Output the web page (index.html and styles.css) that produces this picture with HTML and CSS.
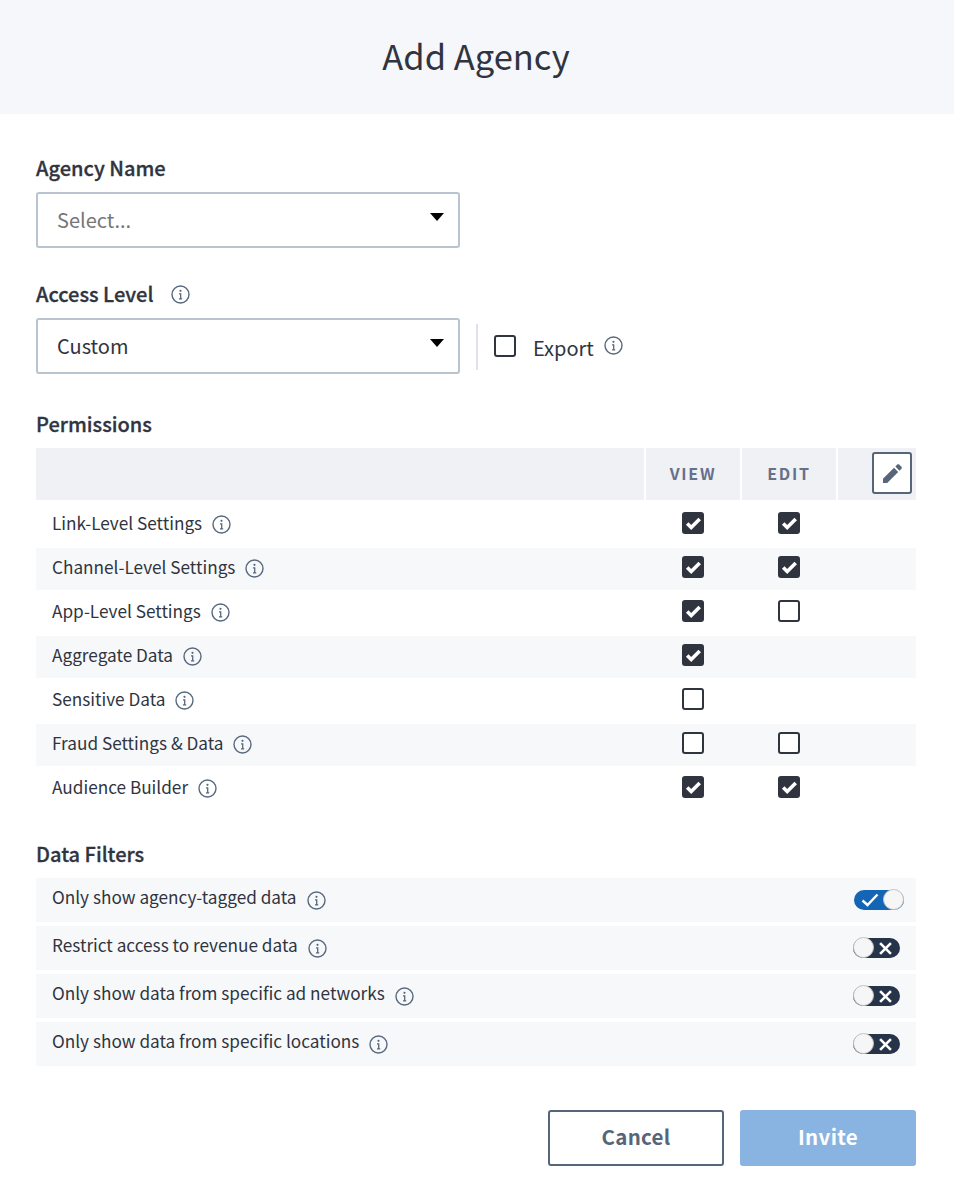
FILE: index.html
```html
<!DOCTYPE html>
<html lang="en">
<head>
<meta charset="utf-8">
<title>Add Agency</title>
<link rel="stylesheet" href="styles.css">
</head>
<body>
<svg class="defs" width="0" height="0" aria-hidden="true">
  <symbol id="info" viewBox="0 0 19 19">
    <circle cx="9.5" cy="9.500" r="8.500" fill="none" stroke="currentColor" stroke-width="1.4"/>
    <circle cx="9.5" cy="5.800" r="1.100" fill="currentColor"/>
    <path d="M8 8.800h1.700v5M8 13.800h3.200" fill="none" stroke="currentColor" stroke-width="1.300"/>
  </symbol>
  <symbol id="tick" viewBox="0 0 22 22">
    <path d="M5.200 11.500l4 4L17.700 7" fill="none" stroke="#fff" stroke-width="3.600"/>
  </symbol>
</svg>
<header class="head"><h1>Add Agency</h1></header>
<main class="body">
  <div class="label l-name">Agency Name</div>
  <div class="select placeholder"><span>Select...</span><i class="caret"></i></div>

  <div class="label l-access">Access Level <svg class="info gap-l"><use href="#info"/></svg></div>
  <div class="access-row">
    <div class="select"><span>Custom</span><i class="caret"></i></div>
    <div class="divider"></div>
    <i class="cb export-cb"></i>
    <span class="export">Export</span>
    <svg class="info export-i"><use href="#info"/></svg>
  </div>

  <div class="label l-perm">Permissions</div>
  <div class="thead">
    <div class="th"></div>
    <div class="th">VIEW</div>
    <div class="th">EDIT</div>
    <div class="th th-edit">
      <div class="pencil-btn">
        <svg width="19" height="19" viewBox="0 0 20 20"><path fill="#56657a" d="M0 20v-4.400L11.600 4l4.400 4.400L4.400 20zM13 2.600L15 .6c.6-.6 1.400-.6 2 0l2.400 2.400c.6.6.6 1.400 0 2l-2 2z"/></svg>
      </div>
    </div>
  </div>
  <div class="rows">
    <div class="row"><div class="name">Link-Level Settings <svg class="info"><use href="#info"/></svg></div><div class="cell"><i class="cb on"><svg><use href="#tick"/></svg></i></div><div class="cell"><i class="cb on"><svg><use href="#tick"/></svg></i></div></div>
    <div class="row alt"><div class="name">Channel-Level Settings <svg class="info"><use href="#info"/></svg></div><div class="cell"><i class="cb on"><svg><use href="#tick"/></svg></i></div><div class="cell"><i class="cb on"><svg><use href="#tick"/></svg></i></div></div>
    <div class="row"><div class="name">App-Level Settings <svg class="info"><use href="#info"/></svg></div><div class="cell"><i class="cb on"><svg><use href="#tick"/></svg></i></div><div class="cell"><i class="cb"></i></div></div>
    <div class="row alt"><div class="name">Aggregate Data <svg class="info"><use href="#info"/></svg></div><div class="cell"><i class="cb on"><svg><use href="#tick"/></svg></i></div><div class="cell"></div></div>
    <div class="row"><div class="name">Sensitive Data <svg class="info"><use href="#info"/></svg></div><div class="cell"><i class="cb"></i></div><div class="cell"></div></div>
    <div class="row alt"><div class="name">Fraud Settings &amp; Data <svg class="info"><use href="#info"/></svg></div><div class="cell"><i class="cb"></i></div><div class="cell"><i class="cb"></i></div></div>
    <div class="row"><div class="name">Audience Builder <svg class="info"><use href="#info"/></svg></div><div class="cell"><i class="cb on"><svg><use href="#tick"/></svg></i></div><div class="cell"><i class="cb on"><svg><use href="#tick"/></svg></i></div></div>
  </div>

  <div class="label l-filters">Data Filters</div>
  <div class="filters">
    <div class="filter"><div class="fname"><span>Only show agency-tagged data</span> <svg class="info"><use href="#info"/></svg></div>
      <div class="toggle t-on"><svg width="18" height="14" viewBox="0 0 18 14"><path d="M1.500 7.500l5 4.500 10-10.500" fill="none" stroke="#fff" stroke-width="2.400"/></svg><i class="knob"></i></div></div>
    <div class="filter"><div class="fname"><span>Restrict access to revenue data</span> <svg class="info"><use href="#info"/></svg></div>
      <div class="toggle t-off"><i class="knob"></i><svg width="13" height="13" viewBox="0 0 12 12"><path d="M1 1l10 10M11 1L1 11" stroke="#fff" stroke-width="2.400"/></svg></div></div>
    <div class="filter"><div class="fname"><span>Only show data from specific ad networks</span> <svg class="info"><use href="#info"/></svg></div>
      <div class="toggle t-off"><i class="knob"></i><svg width="13" height="13" viewBox="0 0 12 12"><path d="M1 1l10 10M11 1L1 11" stroke="#fff" stroke-width="2.400"/></svg></div></div>
    <div class="filter"><div class="fname"><span>Only show data from specific locations</span> <svg class="info"><use href="#info"/></svg></div>
      <div class="toggle t-off"><i class="knob"></i><svg width="13" height="13" viewBox="0 0 12 12"><path d="M1 1l10 10M11 1L1 11" stroke="#fff" stroke-width="2.400"/></svg></div></div>
  </div>

  <div class="actions">
    <button class="btn cancel">Cancel</button>
    <button class="btn invite">Invite</button>
  </div>
</main>
</body>
</html>
```
FILE: styles.css
```css
* { box-sizing: border-box; }
html, body { margin: 0; padding: 0; }
body {
  width: 954px;
  height: 1202px;
  overflow: hidden;
  background: #fff;
  color: #30343f;
  font-family: "Noto Sans CJK SC", "Noto Sans", sans-serif;
}
.defs { position: absolute; }
.head {
  height: 114px;
  background: #f6f7fa;
  display: flex;
  align-items: center;
  justify-content: center;
  padding: 0 2px 4px 0;
}
.head h1 { margin: 0; font-size: 34.500px; line-height: 46px; font-weight: 400; }
.body { padding: 0 38px 0 36px; }
.label { font-size: 20px; line-height: 24px; font-weight: 500; -webkit-text-stroke: 0.3px #30343f; display: flex; align-items: center; }
.l-name { padding-top: 42px; margin-bottom: 12px; }
.l-access { padding-top: 34px; margin-bottom: 12px; }
.l-perm { padding-top: 38px; margin-bottom: 12px; }
.l-filters { padding-top: 32px; margin-bottom: 12px; }
.select {
  width: 424px;
  height: 56px;
  border: 2px solid #b9c4d0;
  border-radius: 3px;
  padding: 0 20px 0 19px;
  display: flex;
  align-items: center;
  justify-content: space-between;
  font-size: 20px;
  line-height: 26px;
}
.placeholder span { color: #777; }
.caret {
  width: 0; height: 0;
  border-left: 7.500px solid transparent;
  border-right: 7.500px solid transparent;
  border-top: 8px solid #000;
  margin: -7px -6px 0 0;
}
.info { width: 19px; height: 19px; color: #58687d; flex: none; vertical-align: -4px; margin-left: 6px; }
.label .gap-l { margin-left: 18px; }
.access-row { display: flex; align-items: center; }
.divider { width: 2px; height: 46px; background: #dfe3e9; margin: 2px 16px 0; }
.cb {
  display: block;
  width: 22px;
  height: 22px;
  border: 2px solid #30343f;
  border-radius: 3px;
  background: #fff;
}
.cb.on { background: #30343f; border: 0; }
.cb svg { display: block; width: 22px; height: 22px; }
.export-cb { margin-right: 17px; }
.export { font-size: 20px; line-height: 26px; margin-top: 3px; }
.access-row .export-i { margin-left: 10px; margin-top: -2px; }
.thead {
  display: grid;
  grid-template-columns: 608px 94px 94px 78px;
  column-gap: 2px;
  height: 52px;
}
.th {
  background: #eff1f5;
  display: flex;
  align-items: center;
  justify-content: center;
  font-size: 16px;
  font-weight: 700;
  letter-spacing: 1.700px;
  color: #66708a;
  padding-bottom: 2px;
}
.th-edit { justify-content: flex-end; padding: 0 4px 0 0; }
.pencil-btn {
  width: 40px;
  height: 42px;
  background: #fff;
  border: 2px solid #56657a;
  border-radius: 3px;
  display: flex;
  align-items: center;
  justify-content: center;
  margin-top: -2px;
}
.rows { display: grid; row-gap: 2px; padding-top: 4px; }
.row {
  display: grid;
  grid-template-columns: 593px 96px 96px;
  height: 42px;
  align-items: center;
  padding-left: 16px;
  padding-bottom: 4px;
}
.row.alt, .filter { background: #f7f8fa; }
.name { font-size: 17.200px; line-height: 24px; }
.cell { display: flex; justify-content: center; }
.filters { display: grid; row-gap: 4px; }
.filter {
  height: 44px;
  padding: 0 12px 0 16px;
  display: flex;
  align-items: center;
  justify-content: space-between;
}
.fname { display: flex; align-items: center; font-size: 17.200px; line-height: 24px; }
.fname span { margin-top: -6px; margin-right: 4px; }
.toggle {
  height: 20px;
  border-radius: 10px;
  display: flex;
  align-items: center;
  position: relative;
}
.t-on { width: 50px; background: #1565b7; padding-left: 7px; justify-content: space-between; }
.t-off { width: 47px; background: #263449; margin-right: 4px; justify-content: flex-end; padding-right: 8px; }
.knob {
  position: absolute;
  top: -1px;
  width: 21px;
  height: 21px;
  border-radius: 50%;
  background: #f6f6f6;
  border: 1px solid #c4c4c4;
}
.t-on .knob { right: 0; }
.t-off .knob { left: 0; }
.actions { display: flex; justify-content: flex-end; gap: 16px; padding-top: 44px; }
.btn {
  width: 176px;
  height: 56px;
  border-radius: 3px;
  font: 700 20.500px/26px "Noto Sans CJK SC", "Noto Sans", sans-serif;
  letter-spacing: 0.300px;
  padding: 0 0 4px;
}
.cancel { background: #fff; border: 2px solid #56657a; color: #56657a; }
.invite { background: #89b3e0; border: 0; color: #fff; }
```
